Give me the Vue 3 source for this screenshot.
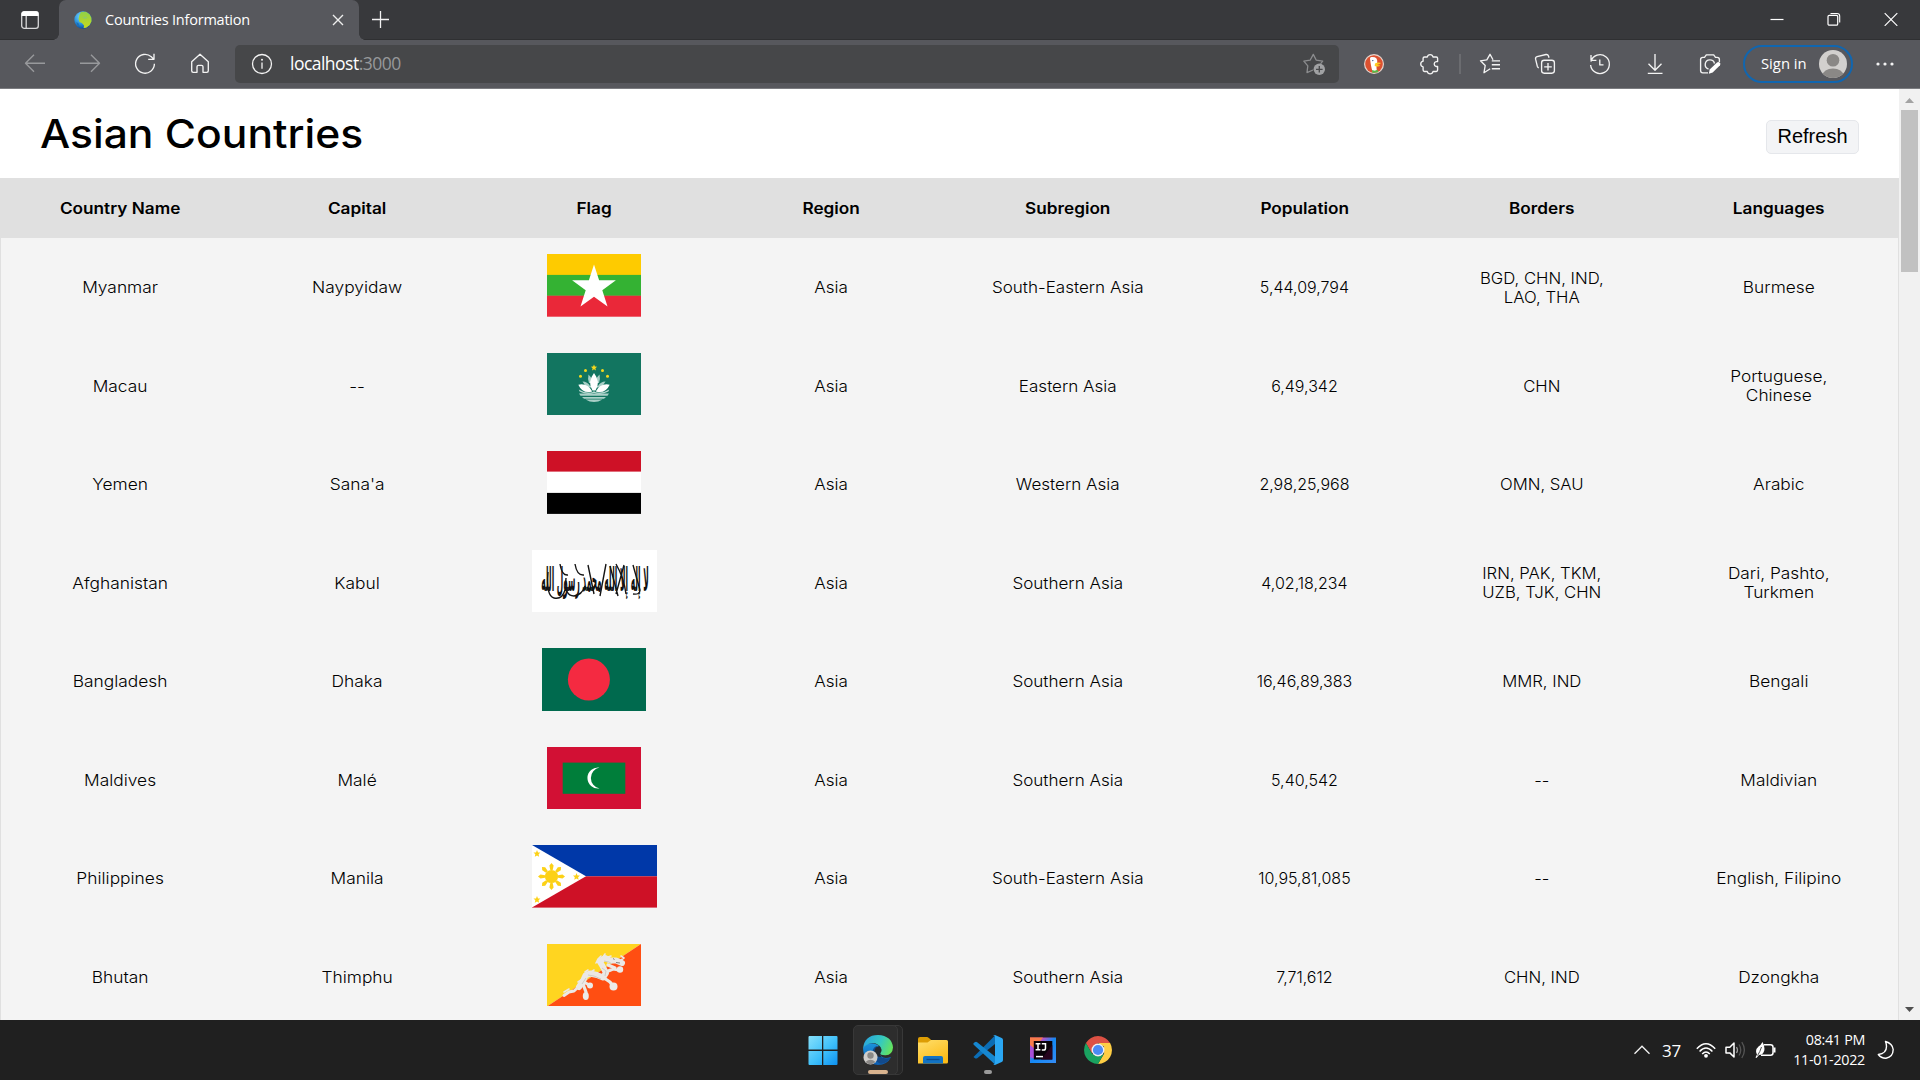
<script setup>
const columns = ['Country Name', 'Capital', 'Flag', 'Region', 'Subregion', 'Population', 'Borders', 'Languages']

const countries = [
  { name: 'Myanmar', capital: 'Naypyidaw', flag: 'mm', width: 94, subregion: 'South-Eastern Asia', population: '5,44,09,794', borders: ['BGD, CHN, IND,', 'LAO, THA'], languages: ['Burmese'] },
  { name: 'Macau', capital: '--', flag: 'mo', width: 94, subregion: 'Eastern Asia', population: '6,49,342', borders: ['CHN'], languages: ['Portuguese,', 'Chinese'] },
  { name: 'Yemen', capital: "Sana'a", flag: 'ye', width: 94, subregion: 'Western Asia', population: '2,98,25,968', borders: ['OMN, SAU'], languages: ['Arabic'] },
  { name: 'Afghanistan', capital: 'Kabul', flag: 'af', width: 125, subregion: 'Southern Asia', population: '4,02,18,234', borders: ['IRN, PAK, TKM,', 'UZB, TJK, CHN'], languages: ['Dari, Pashto,', 'Turkmen'] },
  { name: 'Bangladesh', capital: 'Dhaka', flag: 'bd', width: 104, subregion: 'Southern Asia', population: '16,46,89,383', borders: ['MMR, IND'], languages: ['Bengali'] },
  { name: 'Maldives', capital: 'Malé', flag: 'mv', width: 94, subregion: 'Southern Asia', population: '5,40,542', borders: ['--'], languages: ['Maldivian'] },
  { name: 'Philippines', capital: 'Manila', flag: 'ph', width: 125, subregion: 'South-Eastern Asia', population: '10,95,81,085', borders: ['--'], languages: ['English, Filipino'] },
  { name: 'Bhutan', capital: 'Thimphu', flag: 'bt', width: 94, subregion: 'Southern Asia', population: '7,71,612', borders: ['CHN, IND'], languages: ['Dzongkha'] },
]

const rays = [0, 45, 90, 135, 180, 225, 270, 315]
</script>

<template>
  <div class="screen">
    <div class="tabstrip">
      <div class="tab-actions">
        <svg width="20" height="20" viewBox="0 0 20 20"><rect x="1.7" y="1.7" width="16.6" height="16.6" rx="2.6" fill="none" stroke="#d8d8d9" stroke-width="1.3" /><path d="M1.5 6V3.8Q1.5 1.2 4 1.2h12q2.5 0 2.5 2.6V6z" fill="#fff" /><path d="M6.2 6v12" stroke="#d8d8d9" stroke-width="1.3" /></svg>
      </div>
      <div class="tab">
        <svg class="favicon" width="18" height="18" viewBox="0 0 18 18">
          <defs><radialGradient id="sea" cx=".4" cy=".3" r=".7"><stop offset="0" stop-color="#7fd8ff" /><stop offset=".6" stop-color="#2b93dc" /><stop offset="1" stop-color="#0b4d9c" /></radialGradient>
          <linearGradient id="land" x2="0" y2="1"><stop offset="0" stop-color="#8fd04a" /><stop offset="1" stop-color="#c6d91c" /></linearGradient></defs>
          <circle cx="9" cy="9" r="8.7" fill="url(#sea)" />
          <path d="M7 1l5-.3 3.600 2.500 1.800 3.500.2 3.500-2 4-3.400 2.600-2.600.2.500-2.400-2.200-2.600-2.400-1.100L4.600 8l.8-4z" fill="url(#land)" />
          <path d="M8.500 6.200l3.500-.8 1.400 1.400-2.500 1.200z" fill="#8fc96a" /><path d="M2.500 11l2.200 1.500.6 3L3 13.500z" fill="#1a6fb8" />
        </svg>
        <span class="tab-title">Countries Information</span>
        <svg class="tab-close" width="12" height="12" viewBox="0 0 12 12"><path d="M1 1l10 10M11 1L1 11" stroke="#eee" stroke-width="1.4" /></svg>
      </div>
      <svg class="new-tab" width="18" height="18" viewBox="0 0 18 18"><path d="M9.500 1v17M1 9.500h17" stroke="#f2f2f2" stroke-width="1.3" /></svg>
      <div class="window-controls">
        <svg width="14" height="14" viewBox="0 0 14 14"><path d="M.5 7.500h13" stroke="#fff" stroke-width="1.200" /></svg>
        <svg width="14" height="14" viewBox="0 0 14 14"><path d="M3.500 1.500H10Q12.700 1.500 12.700 4.200V10.500" fill="none" stroke="#fff" stroke-width="1.100" /><rect x="1" y="3.300" width="9.700" height="9.900" rx="1.300" fill="none" stroke="#fff" stroke-width="1.200" /></svg>
        <svg width="14" height="14" viewBox="0 0 14 14"><path d="M.7 1.200l12.600 12.600M13.300 1.200L.7 13.800" stroke="#fff" stroke-width="1.200" /></svg>
      </div>
    </div>

    <div class="toolbar">
      <div class="tool dim"><svg viewBox="0 0 24 24"><path d="M22 11.200H2.800M11 2.700L2.500 11.200 11 19.700" /></svg></div>
      <div class="tool dim"><svg viewBox="0 0 24 24"><path d="M2 11.200h19.200M13 2.700l8.500 8.500-8.500 8.500" /></svg></div>
      <div class="tool"><svg viewBox="0 0 24 24"><path d="M21.400 11.800A9.400 9.400 0 1 1 18.300 4.800L20.800 7.200M21 1.800V7.300H15.200" /></svg></div>
      <div class="tool"><svg viewBox="0 0 24 24"><path d="M3.700 9.800L12 2.300l8.300 7.500V18.800Q20.300 20.300 18.800 20.300H15V14.800Q15 13.300 13.500 13.300H10.500Q9 13.300 9 14.800V20.300H5.200Q3.700 20.300 3.700 18.800Z" /></svg></div>
      <div class="address">
        <svg class="info" width="24" height="24" viewBox="0 0 24 24"><circle cx="12" cy="12" r="9.500" fill="none" stroke="#f3f3f3" stroke-width="1.300" /><path d="M12 10.600v6.200" stroke="#f3f3f3" stroke-width="1.300" /><circle cx="12" cy="7.700" r="1" fill="#f3f3f3" /></svg>
        <span class="url">localhost<span class="port">:3000</span></span>
        <svg class="star-add" width="24" height="24" viewBox="0 0 24 24"><path d="M11 18L5 20.600l.8-6.700L1.800 9.200l6.300-1L11.300 2.400l3 5.800 6.400 1-2.200 2.600" fill="none" stroke="#8c8d8f" stroke-width="1.300" stroke-linejoin="round" /><circle cx="17.300" cy="17.300" r="5.700" fill="#a0a1a3" /><path d="M17.300 14v6.600M14 17.300h6.600" stroke="#47484a" stroke-width="1.300" /></svg>
      </div>
      <div class="tool first">
        <svg viewBox="0 0 24 24" class="solid"><circle cx="12" cy="12" r="10" fill="#e8d5cd" /><circle cx="12" cy="12" r="8.800" fill="#dc5130" /><path d="M8 6.500Q8 4.600 10.300 5.100 15.700 5 15.300 10.400 14 12 14.800 18.600L10.500 19.500Q9 15 8 6.500Z" fill="#fff" /><path d="M13 11.600q3-1.700 6.200-.5-2 1.500-4 1.600 2 1 3 .5-1 2-5.500.7z" fill="#ffcc20" /><path d="M10 18l3 .7 2.500-1 1 2.500-3 .2-3 .6z" fill="#57b947" /><circle cx="10.800" cy="8.600" r=".7" fill="#2c4a80" /></svg>
      </div>
      <div class="tool puzzle"><svg viewBox="0 0 24 24"><path d="M6.500 5H9.300A2.900 2.900 0 0 1 15 5H18.300Q19.600 5 19.600 6.300V9.600H18.200A2.500 2.500 0 0 0 18.200 14.500H19.600V18.100Q19.600 19.500 18.300 19.500H15A2.900 2.900 0 0 1 9.300 19.500H6.500Q5.100 19.500 5.100 18.100V14.900A2.900 2.900 0 0 1 5.100 9.200V6.300Q5.100 5 6.500 5Z" /></svg></div>
      <div class="separator"></div>
      <div class="tool"><svg viewBox="0 0 24 24"><path d="M12.200 16.800L6 20.700l1.200-7.200L2.500 8.800l6.300-1L12 2.300l3 5.500M13.800 8.800H22M13.800 12.700H22M13.800 16.700H22" /></svg></div>
      <div class="tool"><svg viewBox="0 0 24 24"><rect x="8.600" y="8.200" width="12.800" height="13" rx="2.600" /><path d="M15 11v7.600M11.200 14.800h7.600M5.800 15.800Q4.700 15.500 4.300 14.200L2.600 7.200Q2.200 5.200 4.100 4.700L13 2.500Q14.900 2.200 15.500 4L16 5.700" /></svg></div>
      <div class="tool"><svg viewBox="0 0 24 24"><path d="M2.900 9.600A9.400 9.400 0 1 1 2.600 13M3 3V8.300H8.400M3.200 8.200L5.500 5.200M11.800 7.500V12.900H15.500" /></svg></div>
      <div class="tool"><svg viewBox="0 0 24 24"><path d="M12 2v16M5.500 11.800L12 18.200l6.500-6.400M4.800 21.300h14.700" /></svg></div>
      <div class="tool"><svg viewBox="0 0 24 24"><path d="M10 20.800H4.800Q2.600 20.800 2.600 18.600V7.500Q2.600 5.300 4.800 5.300H6.500L8.300 2.800H15.700L17.500 5.300H19.200Q21.400 5.300 21.400 7.500V10" /><path d="M10.500 17A4.700 4.700 0 1 1 16.500 11.500" /><path d="M10.800 21.800l.9-4.200 7.300-7.200q1.400-1 2.700.2t.3 2.600l-7.300 7.300z" fill="#fff" stroke="none" /></svg></div>
      <div class="profile">
        <span>Sign in</span>
        <svg width="28" height="28" viewBox="0 0 28 28"><defs><clipPath id="av"><circle cx="14" cy="14" r="14" /></clipPath></defs><g clip-path="url(#av)"><rect width="28" height="28" fill="#d2d0ce" /><circle cx="14" cy="10.300" r="6.300" fill="#8a8886" /><ellipse cx="14" cy="25.600" rx="10.500" ry="7.200" fill="#8a8886" /></g></svg>
      </div>
      <div class="tool more"><svg viewBox="0 0 24 24" class="solid"><circle cx="5" cy="12" r="1.600" /><circle cx="12" cy="12" r="1.600" /><circle cx="19" cy="12" r="1.600" /></svg></div>
    </div>

    <div class="viewport">
      <main class="page">
        <header class="page-header">
          <h1>Asian Countries</h1>
          <button type="button">Refresh</button>
        </header>
        <section class="table">
          <div class="row head"><div v-for="c in columns" :key="c">{{ c }}</div></div>
          <div v-for="c in countries" :key="c.name" class="row">
            <div class="name">{{ c.name }}</div>
            <div class="name">{{ c.capital }}</div>
            <div class="picture">
              <svg class="flag" :width="c.width" height="62.5" :viewBox="`0 0 ${c.width} 62.5`" preserveAspectRatio="none">
                <template v-if="c.flag === 'mm'">
                  <rect width="94" height="21" fill="#fecb00" /><rect y="20.900" width="94" height="21" fill="#34b233" /><rect y="41.700" width="94" height="21" fill="#ea2839" />
                  <path d="M47 10.500L52.100 26.300H68.900L55.300 36.200L60.500 52.600L47 42.700L33.500 52.600L38.700 36.200L25.100 26.300H41.900Z" fill="#fff" />
                </template>
                <template v-else-if="c.flag === 'mo'">
                  <rect width="94" height="63" fill="#127560" />
                  <g fill="#f6d81c"><path d="M47 11.500l.9 2.100 2.200.1-1.700 1.500.6 2.200-2-1.200-2 1.200.6-2.200-1.700-1.500 2.200-.1z" /><circle cx="38.500" cy="17.600" r="1.500" /><circle cx="55.500" cy="17.600" r="1.500" /><circle cx="33.500" cy="23.300" r="1.500" /><circle cx="60.500" cy="23.300" r="1.500" /></g>
                  <path d="M41.500 21.500q3 2.500 3.500 6h4q.5-3.500 3.500-6 1 4-.5 8.500h-10q-1.500-4.500-.5-8.500zM35.500 28.500q5 0 7.500 4.500h8q2.500-4.500 7.500-4.500l-4 6h-15z" fill="#a9d0c7" />
                  <path d="M47 20q7 9 1.500 17.500h-3Q40 29 47 20zM31.300 31.700q9-2 14 6.700-9.500 3-14-6.700zM62.700 31.700q-9-2-14 6.700 9.500 3 14-6.700z" fill="#fff" />
                  <path d="M31.800 36.500q7 4.500 14.200 2.500l1-1 1 1q7.200 2 14.200-2.500l-.8 2q-7 4-14.400 1.500-7.400 2.500-14.400-1.500z" fill="#b8d9d2" />
                  <path d="M32 40.600h30l-1.500 2.200h-27zM35 43.900h24l-2 1.800H37zM38.500 46.500h17Q47 51.500 38.500 46.500z" fill="#a9d0c7" />
                </template>
                <template v-else-if="c.flag === 'ye'">
                  <rect width="94" height="63" fill="#fff" /><rect width="94" height="20.600" fill="#ce1126" /><rect y="41.900" width="94" height="21" fill="#000" />
                </template>
                <template v-else-if="c.flag === 'af'">
                  <rect width="125" height="63" fill="#fff" />
                  <g class="script">
                    <text transform="translate(63 41) scale(.5 2.200)" text-anchor="middle">لا إله إلا الله محمد رسول الله</text>
                  </g>
                  <path d="M16 22Q14 46 22 48Q30 50 33 40M34 28Q32 46 42 46Q50 45 53 36M56 15L62 44M74 14L68 46M84 14Q92 28 94 44M101 15L108 40Q108 45 101 44M28 14Q30 26 36 25M43 14Q45 26 52 25M78 16L86 46M92 15L84 44" fill="none" stroke="#151515" stroke-width="1.400" />
                </template>
                <template v-else-if="c.flag === 'bd'">
                  <rect width="104" height="63" fill="#006a4e" /><circle cx="46.900" cy="31.500" r="21" fill="#f42a41" />
                </template>
                <template v-else-if="c.flag === 'mv'">
                  <rect width="94" height="63" fill="#d21034" /><rect x="15.700" y="15.600" width="62.600" height="31.200" fill="#007e3a" />
                  <path d="M52.500 20.500A10.600 10.600 0 1 0 52.500 41.500A10.700 10.700 0 0 1 52.500 20.500Z" fill="#fff" />
                </template>
                <template v-else-if="c.flag === 'ph'">
                  <rect width="125" height="31.300" fill="#0038a8" /><rect y="31.300" width="125" height="31.300" fill="#ce1126" /><path d="M0 0L54 31.300L0 62.500Z" fill="#fff" />
                  <g fill="#fcd116"><circle cx="19.500" cy="31.500" r="6.600" />
                    <path v-for="r in rays" :key="r" d="M18.300 25L17.400 20.500L19.500 18L21.600 20.500L20.700 25Z" :transform="`rotate(${r} 19.500 31.500)`" />
                    <path d="M5 5l1 2.400 2.400.2-1.800 1.600.5 2.500L5 10.400l-2.200 1.300.5-2.500L1.500 7.600l2.500-.2z" /><path d="M5 51l1 2.400 2.400.2-1.800 1.600.5 2.500L5 56.400l-2.200 1.300.5-2.500-1.800-1.600 2.500-.2z" /><path d="M44.500 28l1 2.400 2.400.2-1.800 1.600.5 2.500-2.100-1.300-2.200 1.300.5-2.500-1.800-1.600 2.500-.2z" /></g>
                </template>
                <template v-else>
                  <path d="M0 0H94L0 62.500Z" fill="#ffd520" /><path d="M94 0V62.500H0Z" fill="#ff4e12" />
                  <g fill="none" stroke="#ebe8e5" stroke-linecap="round" stroke-linejoin="round">
                    <path d="M17 51.500L22 48L27 47L33 41.500" stroke-width="3" />
                    <path d="M32 43L36 37L38.500 31.500L43 29.500L50 31L56 33.500L59 29L55.500 22L53 18" stroke-width="6" />
                    <path d="M53 17L58 14L63 16.500L69 16.500L75 19" stroke-width="6" />
                    <path d="M59 28L66 25L72 26M57 34L63 38L66 42M37 38L42 41M36 40L39 48M61 21L68 24" stroke-width="3.200" />
                    <path d="M54 12L51 15L49 19M58 10L56 13M64 12L61 13M74 12L77 14L74 16M41 26L38 28M47 26L44 28M22 45L17 48M34 36L31 38" stroke-width="1.600" />
                  </g>
                  <g fill="#eceae8"><ellipse cx="38.800" cy="52" rx="3" ry="4" /><circle cx="43" cy="41.500" r="3" /><circle cx="66.500" cy="42.500" r="4" /><circle cx="73" cy="25.500" r="3.200" /></g>
                  <path d="M57 17l5 1 3 2M55 24l4 3-1 5M41 31l6 1 7 3M35 40l4-6" fill="none" stroke="#c5c0bc" stroke-width=".7" /><path d="M66 14.500l1.500 1M69 18.500l4 .5" stroke="#666" stroke-width=".8" />
                </template>
              </svg>
            </div>
            <div class="region">Asia</div>
            <div class="region">{{ c.subregion }}</div>
            <div>{{ c.population }}</div>
            <div class="lines borders"><span v-for="b in c.borders" :key="b">{{ b }}</span></div>
            <div class="lines languages"><span v-for="l in c.languages" :key="l">{{ l }}</span></div>
          </div>
        </section>
      </main>
      <div class="scrollbar">
        <svg width="21" height="21" viewBox="0 0 21 21"><path d="M6 14L10.500 9L15 14Z" fill="#a3a3a3" /></svg>
        <div class="thumb"></div>
        <svg class="down" width="21" height="21" viewBox="0 0 21 21"><path d="M6 8L10.500 13L15 8Z" fill="#505050" /></svg>
      </div>
    </div>

    <footer class="taskbar">
      <div class="apps">
        <div class="app"><svg width="30" height="30" viewBox="0 0 30 30"><defs><linearGradient id="win" gradientUnits="userSpaceOnUse" x1="0" y1="0" x2="30" y2="30"><stop offset="0" stop-color="#8ae2fb" /><stop offset=".55" stop-color="#3fc0fa" /><stop offset="1" stop-color="#0c90f0" /></linearGradient></defs><path fill="url(#win)" d="M.5 2Q.5 1 1.500 1H14V14.500H.5zM15.300 1H28.500Q29.500 1 29.500 2V14.500H15.300zM.5 16H14V30H1.500Q.5 30 .5 29zM15.300 16H29.500V29Q29.500 30 28.500 30H15.300z" /></svg></div>
        <div class="app active">
          <div class="stack"></div>
          <div class="tile"></div>
          <svg class="glyph" width="30" height="30" viewBox="0 0 30 30">
            <defs><linearGradient id="eg" x1="0" y1=".3" x2="1" y2=".6"><stop offset="0" stop-color="#2aa5de" /><stop offset=".55" stop-color="#35c9c0" /><stop offset="1" stop-color="#66e45a" /></linearGradient><linearGradient id="eb" x2="0" y2="1"><stop offset="0" stop-color="#1b93dc" /><stop offset="1" stop-color="#0b5cb2" /></linearGradient></defs>
            <path d="M0 13.500Q3 7 11 8.500 19 10.500 18 16 16 19 18 21 21 24.500 28 22 24 30 15 30 1 29 0 13.500Z" fill="url(#eb)" />
            <path d="M9.500 17Q8 25 17 28.500 22 30 28 22.500 21 25 16.500 21 12 17 14 11Q10 12 9.500 17Z" fill="#124a8c" />
            <path d="M0 13.500Q1.500 0 15 0 29 .8 30 12.500 29.500 20 22.500 20.200 17 20.300 17.200 18.300 19.500 16 17.800 12.600 14.500 7.500 8.500 8 3 9 0 13.500Z" fill="url(#eg)" />
            <path d="M11.500 16Q12 11.500 16.500 11Q19.500 14.500 17.200 18.300Q16.500 20 18.500 22Q12 22 11.500 16Z" fill="#252a30" />
            <circle cx="7.500" cy="22.500" r="7" fill="#cfcdcb" /><circle cx="7.500" cy="20.500" r="3.200" fill="#8a8886" /><path d="M2.500 27Q7.500 22.500 12.500 27 7.500 31.500 2.500 27Z" fill="#8a8886" />
          </svg>
          <i class="mark wide"></i>
        </div>
        <div class="app"><svg width="30" height="30" viewBox="0 0 30 30"><defs><linearGradient id="fo" x2=".6" y2="1"><stop offset="0" stop-color="#ffdf6c" /><stop offset="1" stop-color="#fcbc19" /></linearGradient></defs><path d="M0 4Q0 2 2 2H9Q10.500 2 13.500 5.500V10H0z" fill="#dd9d04" /><path d="M0 7.500H9.500L13 5H28.500Q30 5 30 6.500V27Q30 28.500 28.500 28.500H0z" fill="url(#fo)" /><path d="M5 28.500V23Q5 21 7 21H23Q25 21 25 23V28.500z" fill="#1273c4" /><path d="M8.500 24.500h13" stroke="#0a4c8f" stroke-width="1.300" /></svg></div>
        <div class="app"><svg width="30" height="30" viewBox="0 0 30 30"><path d="M1 21.500L22 .5V9L4.200 23.200Q3 24 2 23.200L.5 22Z" fill="#0b6db5" /><path d="M.5 9.500Q0 8.500 1 7.800L2.200 7Q3.300 6.500 4.200 7.200L22 21.500V29.500L1 10Z" fill="#1687d0" /><path d="M22 0L28.700 3Q30 3.700 30 5V25Q30 26.300 28.700 27L22 30Q21 30.300 20 29.300 22 30 22 28V2Q22 0 20 .8 21-.2 22 0Z" fill="#2aa7f3" /></svg><i class="mark"></i></div>
        <div class="app"><svg width="28" height="28" viewBox="0 0 28 28"><defs><linearGradient id="ij" x2="1" y2="1"><stop offset="0" stop-color="#fc5a55" /><stop offset=".25" stop-color="#c54fc0" /><stop offset=".5" stop-color="#1389f5" /><stop offset="1" stop-color="#358cf5" /></linearGradient></defs><path d="M1 1.500H27V27H1z" fill="url(#ij)" /><path d="M1 1.500H14L5 13 1 11z" fill="#f77c4b" /><path d="M1 9l5 4v10L1 21z" fill="#a84fd8" /><rect x="4.800" y="5" width="18.500" height="18.500" fill="#090209" /><path d="M12 23.500L23.300 9V23.500Z" fill="#26031d" /><path d="M6.600 7.700h4.800M9 7.700v6M6.600 13.800h4.800M12.800 7.700h3.700v4.500q0 1.800-1.800 1.800h-1.900" fill="none" stroke="#fff" stroke-width="1.500" /><path d="M7 20.600h7" stroke="#fff" stroke-width="1.500" /></svg></div>
        <div class="app"><svg width="28" height="28" viewBox="0 0 28 28"><path d="M1.900 7A14 14 0 0 1 26.100 7H14L7.900 17.500Z" fill="#dd5144" /><path d="M26.100 7A14 14 0 0 1 14 28L20.100 17.500L20 10.500L14 7Z" fill="#ffce44" /><path d="M14 28A14 14 0 0 1 1.900 7L7.900 17.500Q14 23 20.100 17.500Z" fill="#1aa260" /><circle cx="14" cy="14" r="6.500" fill="#f1f1f1" /><circle cx="14" cy="14" r="5.100" fill="#4b8bf5" /></svg></div>
      </div>
      <div class="tray">
        <svg width="18" height="12" viewBox="0 0 18 12"><path d="M1.500 9.800L9 2.200l7.500 7.600" fill="none" stroke="#f3f3f3" stroke-width="1.300" /></svg>
        <span class="temp">37</span>
        <svg class="wifi" width="20" height="18" viewBox="0 0 20 18"><g fill="none" stroke="#fff" stroke-width="1.500"><path d="M.8 7.800Q10-2.200 19.200 7.800M3.600 10.500Q10 3.500 16.400 10.500M6.200 13Q10 8.800 13.800 13" /></g><circle cx="10" cy="14.800" r="1.900" fill="#fff" /></svg>
        <svg class="volume" width="21" height="20" viewBox="0 0 21 20"><path d="M1 7.200H4.800L9 3V17L4.800 12.900H1Z" fill="none" stroke="#fff" stroke-width="1.500" stroke-linejoin="round" /><path d="M11.500 7Q13.500 10 11.500 13" fill="none" stroke="#999" stroke-width="1.300" /><path d="M14 4.500Q17.500 10 14 15.500M16.800 2.200Q22 10 16.800 18" fill="none" stroke="#555" stroke-width="1.300" /></svg>
        <svg class="battery" width="21" height="18" viewBox="0 0 21 18"><path d="M9 3.800H15.500Q18 3.800 18 6.300V11.700Q18 14.200 15.500 14.200H6" fill="none" stroke="#fff" stroke-width="1.500" /><path d="M18.500 6.500h2v5h-2z" fill="#fff" /><path d="M7.500 1Q10 5 9.300 9.500 8 14 4 14L1.500 17 .5 16.500 2 13.500Q-.5 9 3.500 5.500 6 4 7.500 1Z" fill="#fff" /><path d="M6.500 6Q5 11 2.500 14.500" fill="none" stroke="#202020" stroke-width=".8" /></svg>
        <div class="clock"><span class="time">08:41 PM</span><span class="date">11-01-2022</span></div>
        <svg class="moon" width="18" height="20" viewBox="0 0 18 20"><path d="M8.500 1.500Q15.500 3.500 16.200 9.500 16 17 9 18.200 4 18.300 1.300 14.500 9.500 13.500 9.500 6.500 9.500 4 8.500 1.500Z" fill="none" stroke="#fff" stroke-width="1.400" stroke-linejoin="round" /></svg>
      </div>
    </footer>
  </div>
</template>

<style>
body { overflow: hidden; }
</style>

<style scoped>
* { box-sizing: border-box; }
.screen { width: 1920px; height: 1080px; display: flex; flex-direction: column; overflow: hidden; font-family: "Open Sans", "Noto Sans", sans-serif; }
svg { display: block; flex: none; }

.tabstrip { flex: none; height: 40px; display: flex; background: #38393c; box-shadow: inset 0 -1px #2f3032; }
.tab-actions { width: 59px; padding: 10px 0 0 20px; }
.tab { position: relative; width: 300px; height: 40px; display: flex; align-items: center; background: #57585d; border-radius: 7px 7px 0 0; padding: 0 15px; }
.tab::before, .tab::after { content: ""; position: absolute; bottom: 0; width: 6px; height: 6px; }
.tab::before { left: -6px; background: radial-gradient(circle at 0 0, transparent 5.5px, #57585d 6px); }
.tab::after { right: -6px; background: radial-gradient(circle at 100% 0, transparent 5.5px, #57585d 6px); }
.tab-title { margin-left: 13px; color: #fff; font-size: 14.500px; line-height: 20px; letter-spacing: -0.220px; white-space: nowrap; }
.tab-close { margin-left: auto; }
.new-tab { margin: 10px 0 0 12px; }
.window-controls { margin-left: auto; display: flex; gap: 43px; padding: 12px 22px 0 0; }

.toolbar { flex: none; height: 49px; display: flex; align-items: center; padding-left: 7.500px; background: #57585d; border-bottom: 1px solid #7b7c80; }
.tool { flex: none; width: 55px; display: flex; justify-content: center; }
.tool svg { width: 24px; height: 24px; fill: none; stroke: #f3f3f3; stroke-width: 1.350; stroke-linejoin: round; }
.tool svg.solid { fill: #f3f3f3; stroke: none; }
.tool.dim svg { stroke: #98999c; }
.tool.first { margin-left: 7.500px; }
.tool.puzzle { padding-left: 1px; }
.address { flex: none; width: 1104px; height: 38px; margin-left: 7.500px; display: flex; align-items: center; background: #464749; border-radius: 5px; padding: 0 13px 0 15px; }
.url { margin: 0 0 2px 16px; color: #fff; font-size: 17.500px; letter-spacing: -0.520px; line-height: 24px; }
.port { color: #97989a; }
.star-add { margin-left: auto; }
.separator { width: 2px; height: 20px; margin: 0 1.500px 0 2.500px; background: #6b6c70; }
.profile { flex: none; width: 110px; height: 38px; margin-left: 5.500px; display: flex; align-items: center; justify-content: space-between; padding: 0 4px 0 16px; border: 2px solid #1066b0; border-radius: 19px; color: #fff; font-size: 14.800px; letter-spacing: 0; }
.profile span { margin-bottom: 2px; }
.more { margin-left: 4.500px; }

.viewport { flex: 1; min-height: 0; display: flex; background: #fff; }
.page { width: 1899px; overflow: hidden; color: #000; font-family: Inter, "Open Sans", sans-serif; }
.page-header { height: 89px; display: flex; justify-content: space-between; align-items: flex-start; padding: 0 40px; }
h1 { margin: 20px 0 0; font-size: 39.500px; line-height: 50px; font-weight: 550; transform: scaleX(1.078); transform-origin: left; }
button { height: 34px; width: 93px; margin-top: 31px; padding: 0 0 3px; border: 1px solid #e5e7eb; border-radius: 5px; background: #f3f4f6; color: #000; font: 20px/28px "Liberation Sans", sans-serif; }
.table { border: 1px solid #e0e0e0; border-top: 0; border-bottom: 0; background: #f4f4f4; }
.row { display: grid; grid-template-columns: repeat(8, 1fr); height: 98.500px; padding-top: 1px; align-items: center; text-align: center; font-size: 16px; font-weight: 300; line-height: 19px; }
.row > div:nth-child(-n + 4) { padding-left: 1px; }
.row > div:nth-child(n + 5) { padding-right: 1.500px; }
.row.head { height: 60px; padding: 0; background: #e0e0e0; font-weight: 600; font-size: 15.500px; }
.row.head > div { transform: scaleX(1.110); }
.name { transform: scaleX(1.085); }
.region { transform: scaleX(1.065); }
.borders { transform: scaleX(1.045); }
.languages { transform: scaleX(1.080); }
.lines { display: flex; flex-direction: column; }
.flag { margin: 0 auto 5px; }
.script text { font: bold 15px "DejaVu Sans", sans-serif; fill: #111; }

.scrollbar { width: 21px; display: flex; flex-direction: column; background: #f1f1f1; }
.thumb { width: 17px; height: 162px; margin-left: 2px; background: #c1c1c1; }
.down { margin-top: auto; }

.taskbar { flex: none; height: 60px; display: flex; background: #202020; color: #fff; }
.apps { display: flex; margin-left: 795px; }
.app { position: relative; width: 55px; height: 60px; display: flex; align-items: center; justify-content: center; }
.tile, .stack { position: absolute; top: 5px; height: 50px; border-radius: 5px; background: #2d2d2d; border: 1px solid #383838; }
.tile { left: 3px; width: 45px; }
.stack { left: 12px; width: 41px; background: #272727; }
.glyph { position: relative; }
.mark { position: absolute; bottom: 6px; left: 50%; width: 8px; height: 4px; margin-left: -4px; border-radius: 2px; background: #9a9a9a; }
.mark.wide { width: 20px; margin-left: -10px; background: #d9b38e; }
.tray { margin-left: auto; display: flex; align-items: center; padding-right: 25px; }
.temp { width: 20px; margin-left: 11px; font-size: 17px; letter-spacing: -0.200px; }
.wifi { margin-left: 14px; }
.volume { margin-left: 9px; }
.battery { margin-left: 9px; }
.clock { width: 89px; display: flex; flex-direction: column; align-items: flex-end; font-size: 14.300px; line-height: 20px; white-space: nowrap; }
.time { letter-spacing: -0.300px; }
.date { letter-spacing: -0.280px; }
.moon { margin-left: 12px; }
</style>
